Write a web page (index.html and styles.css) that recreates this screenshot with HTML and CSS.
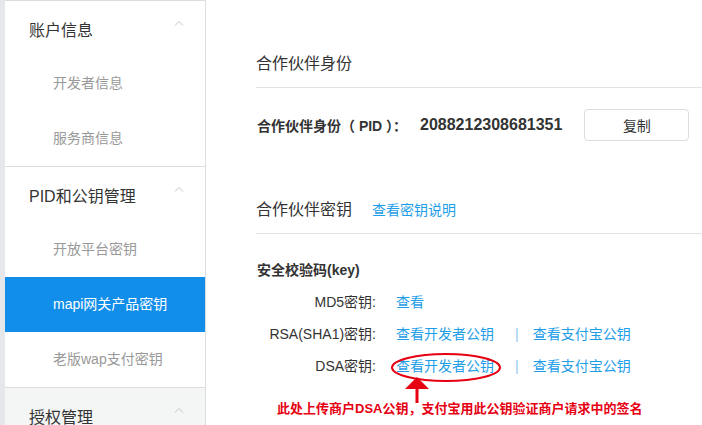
FILE: index.html
```html
<!DOCTYPE html>
<html lang="zh-CN">
<head>
    <meta charset="UTF-8">
    <meta name="viewport" content="width=device-width, initial-scale=1.0">
    <title>合作伙伴密钥</title>
    <link rel="stylesheet" href="styles.css">
</head>
<body>
    <div class="strip"></div>
    <ul class="sidebar">
        <li class="group">
            <div class="group-title">账户信息
                <svg class="caret" width="10" height="6" viewBox="0 0 10 6"><polyline points="1,5.5 5,1.5 9,5.5" fill="none" stroke="#c4c4c4" stroke-width="1"/></svg>
            </div>
            <div class="item">开发者信息</div>
            <div class="item">服务商信息</div>
        </li>
        <li class="group">
            <div class="group-title">PID和公钥管理
                <svg class="caret" width="10" height="6" viewBox="0 0 10 6"><polyline points="1,5.5 5,1.5 9,5.5" fill="none" stroke="#c4c4c4" stroke-width="1"/></svg>
            </div>
            <div class="item">开放平台密钥</div>
            <div class="item active">mapi网关产品密钥</div>
            <div class="item">老版wap支付密钥</div>
        </li>
        <li class="group closed">
            <div class="group-title">授权管理
                <svg class="caret" width="10" height="6" viewBox="0 0 10 6"><polyline points="1,5.5 5,1.5 9,5.5" fill="none" stroke="#c4c4c4" stroke-width="1"/></svg>
            </div>
        </li>
    </ul>

    <div class="main">
        <div class="section-title">合作伙伴身份</div>
        <div class="pid-row">
            <span class="pid-label">合作伙伴身份（ PID ）：</span>
            <span class="pid-num">2088212308681351</span>
            <button class="copy-btn">复制</button>
        </div>

        <div class="section-title second">合作伙伴密钥 <a class="link title-link">查看密钥说明</a></div>

        <div class="key-head">安全校验码(key)</div>
        <div class="key-row">
            <span class="key-label">MD5密钥:</span>
            <a class="link">查看</a>
        </div>
        <div class="key-row">
            <span class="key-label">RSA(SHA1)密钥:</span>
            <a class="link">查看开发者公钥</a>
            <span class="sep">|</span>
            <a class="link">查看支付宝公钥</a>
        </div>
        <div class="key-row">
            <span class="key-label">DSA密钥:</span>
            <a class="link">查看开发者公钥</a>
            <span class="sep">|</span>
            <a class="link">查看支付宝公钥</a>
        </div>
        <div class="note">此处上传商户DSA公钥，支付宝用此公钥验证商户请求中的签名</div>

        <!-- 标注：红圈和箭头 -->
        <svg class="mark" width="496" height="425" viewBox="0 0 496 425">
            <ellipse cx="240" cy="367.5" rx="54" ry="13.5" fill="none" stroke="#e60012" stroke-width="2"/>
            <polygon points="211,377 199,389 223,389" fill="#e60012"/>
            <rect x="209.5" y="388" width="3" height="15" fill="#e60012"/>
        </svg>
    </div>
</body>
</html>
```

FILE: styles.css
```css
* {
    margin: 0;
    padding: 0;
    list-style: none;
    box-sizing: border-box;
}

body {
    display: flex;
    width: 702px;
    height: 425px;
    overflow: hidden;
    background-color: #fff;
    color: #333;
    font-family: "Liberation Sans", "Noto Sans CJK SC", sans-serif;
    font-size: 14px;
}

.strip {
    width: 5px;
    background-color: #e6e7eb;
}

.sidebar {
    display: flex;
    flex-direction: column;
    width: 201px;
    border-top: 1px solid #dddddd;
    border-right: 1px solid #dddddd;
}

.sidebar .group {
    border-bottom: 1px solid #dddddd;
}

.sidebar .group.closed {
    flex: 1;
    background-color: #f4f5f5;
    border-bottom: none;
}

.sidebar .group-title {
    display: flex;
    align-items: center;
    justify-content: space-between;
    height: 55px;
    padding: 0 21px 0 24px;
    font-size: 16px;
    color: #333;
}

.sidebar .caret {
    margin-bottom: 11px;
}

.sidebar .item {
    height: 55px;
    line-height: 55px;
    padding-left: 48px;
    color: #999;
}

.sidebar .item.active {
    background-color: #118ee9;
    color: #fff;
}

.main {
    position: relative;
    flex: 1;
    padding: 40px 0 0 50px;
}

.main .section-title {
    display: flex;
    align-items: center;
    padding: 12px 0 11px;
    line-height: 24px;
    font-size: 16px;
    border-bottom: 1px solid #e3e3e3;
}

.main .section-title.second {
    margin-top: 45px;
}

.link {
    color: #1e9de8;
    cursor: pointer;
}

.main .title-link {
    margin-left: 20px;
    font-size: 14px;
}

.pid-row {
    display: flex;
    align-items: center;
    height: 32px;
    margin-top: 21px;
    font-weight: 700;
}

.pid-label {
    width: 164px;
    padding-left: 1px;
}

.pid-num {
    font-size: 16px;
}

.copy-btn {
    width: 105px;
    height: 32px;
    margin-left: 22px;
    border: 1px solid #dddddd;
    border-radius: 4px;
    background-color: #fff;
    color: #333;
    font-family: inherit;
    font-size: 14px;
}

.key-head {
    margin-top: 24px;
    margin-bottom: 4px;
    padding-left: 1px;
    line-height: 24px;
    font-weight: 700;
}

.key-row {
    display: flex;
    line-height: 32px;
}

.key-row .key-label {
    width: 120px;
    margin-right: 20px;
    text-align: right;
}

.key-row .sep {
    padding: 0 14px 0 21px;
    color: #8ec9ee;
}

.note {
    margin-top: 18px;
    padding-left: 21px;
    line-height: 18px;
    font-size: 13px;
    font-weight: 700;
    color: #e60012;
}

.mark {
    position: absolute;
    top: 0;
    left: 0;
}
```
